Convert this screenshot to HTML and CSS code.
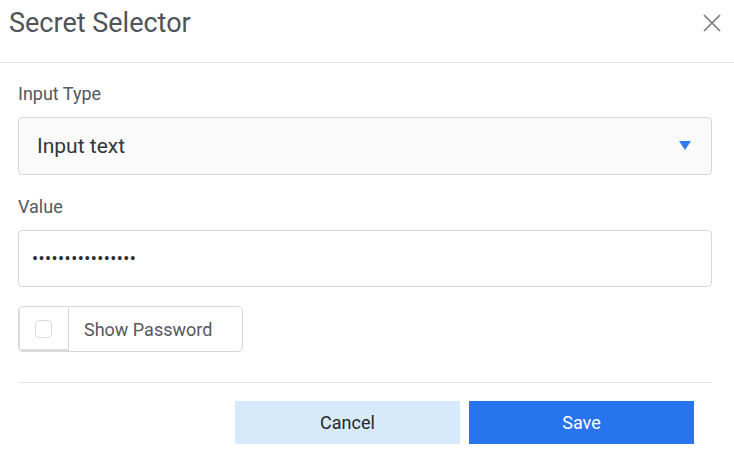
FILE: index.html
```html
<!DOCTYPE html>
<html lang="en">
<head>
<meta charset="utf-8">
<title>Secret Selector</title>
<link rel="stylesheet" href="styles.css">
</head>
<body>
<div class="dialog">
  <div class="header">
    <h1 class="title">Secret Selector</h1>
    <button class="close" aria-label="Close">
      <svg width="18" height="18" viewBox="0 0 18 18"><path d="M1 1 L17 17 M17 1 L1 17" stroke="#7a7a7a" stroke-width="1.7" fill="none"/></svg>
    </button>
  </div>
  <div class="body">
    <div class="label first">Input Type</div>
    <div class="select">
      <span class="select-text">Input text</span>
      <svg class="arrow" width="12" height="9" viewBox="0 0 12 9"><path d="M0 0 H12 L6 9 Z" fill="#2f7bf0"/></svg>
    </div>
    <div class="label">Value</div>
    <input class="text-input" type="password" value="abcdefghijklmnop">
    <div class="check-group">
      <div class="check-cell"><span class="check-box"></span></div>
      <div class="check-label">Show Password</div>
    </div>
    <div class="divider"></div>
    <div class="actions">
      <button class="btn btn-cancel">Cancel</button>
      <button class="btn btn-save">Save</button>
    </div>
  </div>
</div>
</body>
</html>
```
FILE: styles.css
```css
* { box-sizing: border-box; }
html, body { margin: 0; padding: 0; background: #ffffff; }
body { font-family: Roboto, "Liberation Sans", Arial, sans-serif; }
.dialog { width: 734px; }
.header {
  height: 63px;
  border-bottom: 1px solid #e6e6e6;
  display: flex;
  justify-content: space-between;
  align-items: flex-start;
  padding: 8px 13px 0 9px;
}
.title {
  margin: 0;
  font-size: 27px;
  line-height: 31px;
  font-weight: 400;
  color: #50535a;
}
.close {
  margin-top: 6px;
  width: 18px;
  height: 18px;
  padding: 0;
  border: 0;
  background: transparent;
  display: block;
}
.close svg { display: block; }
.body { padding: 0 22px 0 18px; }
.label {
  margin-top: 21px;
  margin-bottom: 13px;
  font-size: 18px;
  line-height: 21px;
  color: #55585e;
}
.label.first { margin-top: 20px; }
.select {
  height: 58px;
  border: 1px solid #d4d7dc;
  border-radius: 4px;
  background: #fafafa;
  display: flex;
  align-items: center;
  justify-content: space-between;
  padding: 0 20px 0 18px;
}
.select-text { font-size: 21px; color: #333539; }
.arrow { display: block; margin-top: -1px; }
.text-input {
  display: block;
  width: 100%;
  height: 57px;
  border: 1px solid #d4d7dc;
  border-radius: 4px;
  background: #ffffff;
  padding: 0 0 0 13px;
  font-family: Roboto, "Liberation Sans", Arial, sans-serif;
  font-size: 18px;
  letter-spacing: 0.45px;
  color: #2a2c30;
  outline: none;
}
.check-group {
  margin-top: 19px;
  width: 225px;
  height: 46px;
  border: 1px solid #d4d7dc;
  border-radius: 5px;
  display: flex;
  overflow: hidden;
}
.check-cell {
  width: 50px;
  border-right: 1px solid #d4d7dc;
  box-shadow: inset 1px -2px 0 #dadde2;
  display: flex;
  align-items: center;
  justify-content: center;
}
.check-box {
  width: 17px;
  height: 18px;
  border: 1px solid #d9dce0;
  border-radius: 4px;
  background: #ffffff;
}
.check-label {
  display: flex;
  align-items: center;
  padding-left: 15px;
  font-size: 18px;
  color: #55585e;
}
.divider {
  margin-top: 30px;
  height: 1px;
  background: #e6e6e6;
}
.actions {
  display: flex;
  justify-content: flex-end;
  gap: 9px;
  padding: 18px 18px 0 0;
}
.btn {
  width: 225px;
  height: 43px;
  border: 0;
  border-radius: 0;
  font-family: Roboto, "Liberation Sans", Arial, sans-serif;
  font-size: 18px;
  padding: 0;
}
.btn-cancel { background: #d6eafb; color: #26282c; }
.btn-save { background: #2874ee; color: #ffffff; }
```
